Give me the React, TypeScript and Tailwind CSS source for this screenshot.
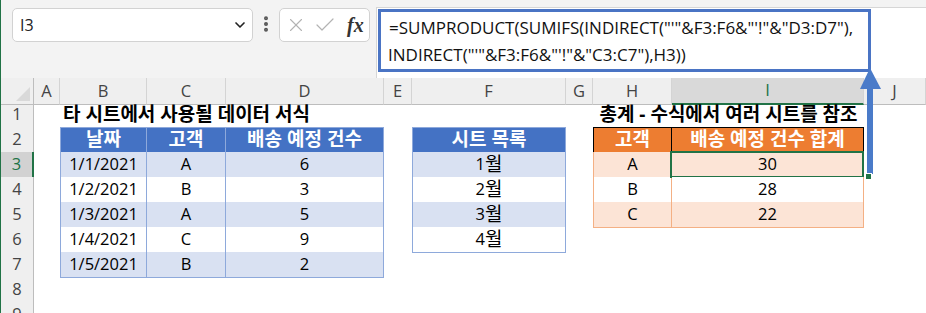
import { ChevronDown, EllipsisVertical, X, Check } from "lucide-react";

const GRID =
  "grid grid-cols-[33px_26px_87px_79px_158px_28px_154px_27px_79px_192px_62px]";
const FONT = { fontFamily: '"Open Sans", "Noto Sans CJK KR", sans-serif' };

const letters = ["A", "B", "C", "D", "E", "F", "G", "H", "I", "J"];

type Row = {
  n: number;
  b?: string;
  c?: string;
  d?: string;
  f?: string;
  h?: string;
  i?: string;
};

const rows: Row[] = [
  { n: 3, b: "1/1/2021", c: "A", d: "6", f: "1", h: "A", i: "30" },
  { n: 4, b: "1/2/2021", c: "B", d: "3", f: "2", h: "B", i: "28" },
  { n: 5, b: "1/3/2021", c: "A", d: "5", f: "3", h: "C", i: "22" },
  { n: 6, b: "1/4/2021", c: "C", d: "9", f: "4" },
  { n: 7, b: "1/5/2021", c: "B", d: "2" },
];

// korean glyphs render narrower than Malgun Gothic, so bump them
const Ko = ({ children }: { children: React.ReactNode }) => (
  <span className="text-[19px] leading-none">{children}</span>
);

const RowHead = ({ n }: { n: number }) =>
  n === 3 ? (
    <div className="flex items-center justify-center bg-[#d2d2d2] text-[#217346] border-r-2 border-r-[#217346] border-b border-b-[#d4d4d4]">
      {n}
    </div>
  ) : (
    <div className="flex items-center justify-center bg-[#efefef] text-[#444] border-r border-r-[#bdbdbd] border-b border-b-[#d4d4d4]">
      {n}
    </div>
  );

export default function App() {
  return (
    <div
      className="relative w-[926px] h-[313px] overflow-hidden bg-white border-l border-l-[#217346] text-[16.5px] text-black"
      style={FONT}
    >
      {/* formula bar */}
      <div className="flex h-[78px] bg-[#f3f3f3]">
        <div className="ml-[11px] mt-2 flex h-[34px] w-[241px] items-center justify-between rounded-[5px] border border-[#d2d2d2] bg-white pl-[7px] pr-[4px] text-[16px] text-[#222]">
          <span>I3</span>
          <ChevronDown size={16} strokeWidth={2.5} className="text-[#222]" />
        </div>
        <div className="mt-[14px] ml-[3px] flex h-5 w-5 items-start justify-center text-[#555]">
          <EllipsisVertical size={20} strokeWidth={2.8} />
        </div>
        <div className="ml-[3px] mt-2 flex h-[34px] w-[91px] items-center gap-[6px] rounded-[5px] border border-[#d2d2d2] bg-white pl-[5px]">
          <X size={22} strokeWidth={1.2} className="text-[#b3b3b3]" />
          <Check size={24} strokeWidth={1.2} className="text-[#b3b3b3]" />
          <span
            className="ml-[4px] text-[20px] font-bold italic text-[#333]"
            style={{ fontFamily: '"Liberation Serif", serif' }}
          >
            fx
          </span>
        </div>
        <div className="ml-[6px] mt-[7px] flex-1 h-[72px] border border-[#d6d6d6] border-r-0 bg-white">
          <div className="ml-[1px] mt-[1px] w-[493px] h-[63px] border-[3px] border-[#4a74c4] pl-[7px] pt-[2px] text-[17px] leading-[27px] text-[#111]">
            <div className="pl-[1px]">
              =SUMPRODUCT(SUMIFS(INDIRECT("'"&amp;F3:F6&amp;"'!"&amp;"D3:D7"),
            </div>
            <div>INDIRECT("'"&amp;F3:F6&amp;"'!"&amp;"C3:C7"),H3))</div>
          </div>
        </div>
      </div>

      {/* column headers */}
      <div className={`${GRID} h-[24px] text-[#444]`}>
        <div className="relative bg-[#efefef] border-r border-r-[#bdbdbd] border-b border-b-[#bdbdbd]">
          <svg className="absolute right-[3px] bottom-[3px]" width="14" height="14">
            <polygon points="14,0 14,14 0,14" fill="#d9d9d9" />
          </svg>
        </div>
        {letters.map((l) =>
          l === "I" ? (
            <div
              key={l}
              className="flex items-center justify-center bg-[#d9d9d9] text-[#217346] border-r border-r-[#d4d4d4] border-b-2 border-b-[#217346]"
            >
              {l}
            </div>
          ) : (
            <div
              key={l}
              className="flex items-center justify-center bg-[#efefef] border-r border-r-[#d4d4d4] border-b border-b-[#bdbdbd]"
            >
              {l}
            </div>
          )
        )}
      </div>

      {/* row 1 */}
      <div className={`${GRID} h-[25px]`}>
        <RowHead n={1} />
        <div />
        <div className="col-span-4 flex items-center pl-[3px] font-bold whitespace-nowrap">
          <Ko>타 시트에서 사용될 데이터 서식</Ko>
        </div>
        <div />
        <div />
        <div className="col-span-2 flex items-center justify-center font-bold whitespace-nowrap">
          <Ko>총계 - 수식에서 여러 시트를 참조</Ko>
        </div>
        <div />
      </div>

      {/* row 2 */}
      <div className={`${GRID} h-[25px]`}>
        <RowHead n={2} />
        <div />
        <div className="flex items-center justify-center bg-[#4472c4] font-bold text-white border border-[#8ea9db]">
          <Ko>날짜</Ko>
        </div>
        <div className="flex items-center justify-center bg-[#4472c4] font-bold text-white border-y border-r border-[#8ea9db]">
          <Ko>고객</Ko>
        </div>
        <div className="flex items-center justify-center bg-[#4472c4] font-bold text-white border-y border-r border-[#8ea9db]">
          <Ko>배송 예정 건수</Ko>
        </div>
        <div />
        <div className="flex items-center justify-center bg-[#4472c4] font-bold text-white border border-[#8ea9db]">
          <Ko>시트 목록</Ko>
        </div>
        <div />
        <div className="flex items-center justify-center bg-[#ed7d31] font-bold text-white border border-black">
          <Ko>고객</Ko>
        </div>
        <div className="flex items-center justify-center bg-[#ed7d31] font-bold text-white border-y border-r border-black">
          <Ko>배송 예정 건수 합계</Ko>
        </div>
        <div />
      </div>

      {rows.map((r, idx) => {
        const blue = idx % 2 === 0 ? "bg-[#d9e1f2]" : "bg-white";
        const peach = idx % 2 === 0 ? "bg-[#fce4d6]" : "bg-white";
        return (
          <div key={r.n} className={`${GRID} h-[25px]`}>
            <RowHead n={r.n} />
            <div />
            <div className={`flex items-center justify-center ${blue} border-x border-b border-[#8ea9db]`}>
              {r.b}
            </div>
            <div className={`flex items-center justify-center ${blue} border-r border-b border-[#8ea9db]`}>
              {r.c}
            </div>
            <div className={`flex items-center justify-center ${blue} border-r border-b border-[#8ea9db]`}>
              {r.d}
            </div>
            <div />
            {r.f ? (
              <div className={`flex items-center justify-center ${blue} border-x border-b border-[#8ea9db]`}>
                {r.f}
                <Ko>월</Ko>
              </div>
            ) : (
              <div />
            )}
            <div />
            {r.h ? (
              <div className={`flex items-center justify-center ${peach} border-x border-b border-[#f4b084]`}>
                {r.h}
              </div>
            ) : (
              <div />
            )}
            {r.i ? (
              <div className={`relative flex items-center justify-center ${peach} border-r border-b border-[#f4b084]`}>
                {r.i}
                {r.n === 3 && (
                  <div className="absolute -left-[2px] -top-[1px] -right-[1px] -bottom-[1px] border-2 border-[#217346]" />
                )}
              </div>
            ) : (
              <div />
            )}
            <div />
          </div>
        );
      })}

      {[8, 9].map((n) => (
        <div key={n} className={`${GRID} h-[25px]`}>
          <RowHead n={n} />
        </div>
      ))}

      {/* arrow from cell to formula */}
      <svg
        className="absolute left-[858px] top-[67px]"
        width="24"
        height="110"
        viewBox="0 0 24 110"
      >
        <polygon points="11,1 22,22 1,22" fill="#4a7bc9" />
        <rect x="8" y="20" width="6" height="87" fill="#4a7bc9" />
      </svg>
      {/* fill handle */}
      <div className="absolute left-[864px] top-[173px] h-[7px] w-[7px] bg-[#217346] border border-white" />
    </div>
  );
}
